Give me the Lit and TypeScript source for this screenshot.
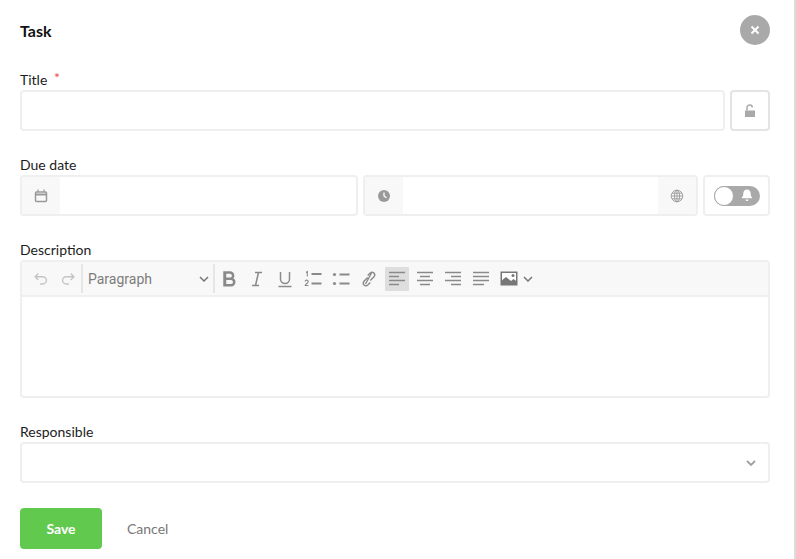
import { LitElement, html, css, svg } from 'lit';
import { customElement } from 'lit/decorators.js';

const icon = (size: number, body: unknown) => html`
  <svg width=${size} height=${size} viewBox="0 0 20 20" fill="none" stroke="#8a8a8a" stroke-width="1.5">${body}</svg>
`;

const lines = (rows: number[][]) => rows.map(([a, b]) => svg`<path d="M${a} 0H${b}" transform="translate(0 0)" />`);

const alignIcon = (rows: [number, number, number][]) => icon(20, rows.map(([a, b, y]) => svg`<path d="M${a} ${y}H${b}" />`));

@customElement('app-root')
export class AppRoot extends LitElement {
  static styles = css`
    :host {
      display: block;
      width: 796px;
      height: 559px;
      box-sizing: border-box;
      border-right: 2px solid #dcdcdc;
      background: #fff;
      font-family: Lato, "Liberation Sans", sans-serif;
      font-size: 14px;
      color: #1c1c1c;
      overflow: hidden;
    }

    .form {
      display: flex;
      flex-direction: column;
      padding: 15px 24px 0 20px;
    }

    .head {
      display: flex;
      align-items: center;
      justify-content: space-between;
      height: 30px;
      margin-bottom: 25px;
    }

    .head h1 {
      margin: 0;
      font-size: 16px;
      font-weight: 700;
      color: #111;
    }

    .close {
      width: 30px;
      height: 30px;
      border-radius: 50%;
      background: #a9a9a9;
      display: flex;
      align-items: center;
      justify-content: center;
    }

    label {
      display: block;
      height: 20px;
      line-height: 20px;
    }

    .req {
      color: #f5474f;
      margin-left: 3px;
      position: relative;
      top: -2px;
    }

    .row {
      display: flex;
      gap: 5px;
      height: 41px;
    }

    .box {
      box-sizing: border-box;
      border: 2px solid #efefef;
      border-radius: 4px;
      background: #fff;
      display: flex;
      align-items: stretch;
      overflow: hidden;
      height: 41px;
    }

    .grow {
      flex: 1;
    }

    .group {
      margin-bottom: 24px;
    }

    .lock {
      width: 40px;
      border-color: #e4e4e4;
      align-items: center;
      justify-content: center;
    }

    .addon {
      width: 38px;
      background: #f8f8f8;
      display: flex;
      align-items: center;
      justify-content: center;
      flex: none;
    }

    .date {
      width: 338px;
      flex: none;
    }

    .time {
      flex: 1;
    }

    .bell {
      width: 67px;
      flex: none;
      align-items: center;
      justify-content: center;
    }

    .toggle {
      width: 46px;
      height: 20px;
      border-radius: 10px;
      background: #a9a9a9;
      display: flex;
      align-items: center;
      justify-content: space-between;
      padding-right: 7px;
      box-sizing: border-box;
    }

    .knob {
      width: 20px;
      height: 20px;
      box-sizing: border-box;
      border-radius: 50%;
      background: #fff;
      border: 1.5px solid #a9a9a9;
    }

    .editor {
      box-sizing: border-box;
      border: 2px solid #efefef;
      border-radius: 4px;
      height: 138px;
      display: flex;
      flex-direction: column;
    }

    .toolbar {
      height: 35px;
      flex: none;
      box-sizing: border-box;
      background: #f8f8f8;
      border-bottom: 2px solid #efefef;
      display: flex;
      align-items: center;
      padding-left: 5px;
    }

    .tool {
      width: 28px;
      height: 24px;
      display: flex;
      align-items: center;
      justify-content: center;
      flex: none;
    }

    .tool.on {
      background: #dedede;
      width: 24px;
      margin: 0 2px;
      border-radius: 1px;
    }

    .hist {
      width: 27px;
    }

    .sep {
      width: 2px;
      height: 29px;
      background: #e6e6e6;
      flex: none;
    }

    .style {
      width: 130px;
      flex: none;
      box-sizing: border-box;
      padding: 0 4px 0 5px;
      display: flex;
      align-items: center;
      justify-content: space-between;
      font-family: Roboto, "Liberation Sans", sans-serif;
      font-size: 14px;
      color: #7c7c7c;
    }

    .select {
      justify-content: flex-end;
      align-items: center;
      padding-right: 12px;
    }

    .actions {
      display: flex;
      align-items: center;
      margin-top: 1px;
    }

    .save {
      width: 82px;
      height: 41px;
      border: 0;
      border-radius: 4px;
      background: #62c94f;
      color: #fff;
      font: 700 14px Lato, "Liberation Sans", sans-serif;
      padding: 0;
    }

    .cancel {
      margin-left: 25px;
      color: #777;
    }
  `;

  render() {
    return html`
      <div class="form">
        <div class="head">
          <h1>Task</h1>
          <div class="close">
            <svg width="10" height="10" viewBox="0 0 10 10" stroke="#fff" stroke-width="2"><path d="M1.5 1.5l7 7M8.500 1.5l-7 7" /></svg>
          </div>
        </div>

        <div class="group">
          <label>Title <span class="req">*</span></label>
          <div class="row">
            <div class="box grow"></div>
            <div class="box lock">
              <svg width="12" height="14" viewBox="0 0 12 14" fill="#a9a9a9"><path d="M1 6.500h10V13H1z" /><path d="M3 6.500V4a2.700 2.700 0 0 1 5.400-.6" fill="none" stroke="#a9a9a9" stroke-width="1.500" /></svg>
            </div>
          </div>
        </div>

        <div class="group">
          <label>Due date</label>
          <div class="row">
            <div class="box date">
              <div class="addon">
                <svg width="14" height="14" viewBox="0 0 14 14" fill="none" stroke="#9a9a9a" stroke-width="1.500"><rect x="1.500" y="3" width="11" height="9.500" rx="1" /><path d="M1.500 5.500h11" stroke-width="2" /><path d="M4 .5v2.500M10 .5v2.500" stroke-width="1.200" /></svg>
              </div>
            </div>
            <div class="box time">
              <div class="addon">
                <svg width="14" height="14" viewBox="0 0 14 14"><circle cx="7" cy="7" r="6" fill="#9a9a9a" /><path d="M7 3.500V7l2.500 1.800" fill="none" stroke="#fff" stroke-width="1.300" /></svg>
              </div>
              <div class="grow"></div>
              <div class="addon">
                <svg width="14" height="14" viewBox="0 0 14 14" fill="none" stroke="#9a9a9a" stroke-width=".9"><circle cx="7" cy="7" r="5.800" /><ellipse cx="7" cy="7" rx="2.600" ry="5.800" /><path d="M1.200 7h11.600M2 4.200h10M2 9.800h10M7 1.200v11.600" /></svg>
              </div>
            </div>
            <div class="box bell">
              <div class="toggle">
                <div class="knob"></div>
                <svg width="12" height="13" viewBox="0 0 12 13" fill="#fff"><path d="M6 .5c-2.400 0-3.700 1.700-3.700 4 0 2.400-.7 3.500-1.800 4.800h11C10.400 8 9.700 6.900 9.700 4.500c0-2.300-1.300-4-3.700-4z" /><path d="M4.500 10.400h3a1.500 1.500 0 0 1-3 0z" /></svg>
              </div>
            </div>
          </div>
        </div>

        <div class="group">
          <label>Description</label>
          <div class="editor">
            <div class="toolbar">
              <div class="tool hist">${icon(18, svg`<path stroke="#c4c4c4" d="M3.500 7.500h8.500a4 4 0 0 1 0 8H9M7 4L3.500 7.500 7 11" />`)}</div>
              <div class="tool hist">${icon(18, svg`<path stroke="#c4c4c4" d="M16.500 7.500H8a4 4 0 0 0 0 8h3M13 4l3.500 3.500L13 11" />`)}</div>
              <div class="sep"></div>
              <div class="style">
                <span>Paragraph</span>
                <svg width="10" height="6" viewBox="0 0 10 6" fill="none" stroke="#777" stroke-width="1.500"><path d="M1 1l4 4 4-4" /></svg>
              </div>
              <div class="sep"></div>
              <div class="tool">${icon(20, svg`<path fill="none" stroke="#8a8a8a" stroke-width="2.500" d="M5.500 3.500h5.500a3 3 0 0 1 0 6.300H5.500h6.500a3.200 3.200 0 0 1 0 6.500H5.500zM6 3v13.500" />`)}</div>
              <div class="tool">${icon(20, svg`<path d="M8 3.500h7M5 16.500h7M11.500 3.500l-3 13" />`)}</div>
              <div class="tool">${icon(20, svg`<path d="M5.500 3v7a4.500 4.500 0 0 0 9 0V3M3.500 17.500h13" />`)}</div>
              <div class="tool">${icon(20, svg`<path d="M8.500 5h10M8.500 14.500h10" stroke-width="1.800" /><path stroke-width="1.100" d="M3 3.500l1.300-1v5M2.200 12.500a1.500 1.500 0 0 1 3 .3c0 1-2.800 2.400-3 3.700h3.200" />`)}</div>
              <div class="tool">${icon(20, svg`<path d="M8.500 5.500h10M8.500 14.500h10" stroke-width="1.800" /><circle cx="3.500" cy="5.500" r="1.600" fill="#8a8a8a" stroke="none" /><circle cx="3.500" cy="14.500" r="1.600" fill="#8a8a8a" stroke="none" />`)}</div>
              <div class="tool">${icon(20, svg`<path stroke-width="1.400" d="M8.700 8.500L5 12.200a3 3 0 0 0 0 3.800 3 3 0 0 0 3.800 0l2.500-2.500M11.300 11.500L15 7.800a3 3 0 0 0 0-3.800 3 3 0 0 0-3.800 0L8.700 6.500M12.500 4L6.500 15" />`)}</div>
              <div class="tool on">${alignIcon([[2, 18, 3.500], [2, 12, 7.500], [2, 18, 11.500], [2, 12, 15.500]])}</div>
              <div class="tool">${alignIcon([[2, 18, 3.500], [5, 15, 7.500], [2, 18, 11.500], [5, 15, 15.500]])}</div>
              <div class="tool">${alignIcon([[2, 18, 3.500], [8, 18, 7.500], [2, 18, 11.500], [8, 18, 15.500]])}</div>
              <div class="tool">${alignIcon([[2, 18, 3.500], [2, 18, 7.500], [2, 18, 11.500], [2, 13, 15.500]])}</div>
              <div class="tool">
                <svg width="18" height="15" viewBox="0 0 18 15"><rect x=".5" y=".5" width="17" height="14" fill="#777" /><rect x="2" y="2" width="14" height="11" fill="#fff" /><path d="M1 14V10l5-4 5 4 2.500-2L17 10.500V14z" fill="#777" /><circle cx="13" cy="4.500" r="1.500" fill="#777" /></svg>
              </div>
              <svg width="10" height="6" viewBox="0 0 10 6" fill="none" stroke="#777" stroke-width="1.500"><path d="M1 1l4 4 4-4" /></svg>
            </div>
          </div>
        </div>

        <div class="group">
          <label>Responsible</label>
          <div class="box select">
            <svg width="10" height="6" viewBox="0 0 10 6" fill="none" stroke="#a0a0a0" stroke-width="1.800"><path d="M1 1l4 4 4-4" /></svg>
          </div>
        </div>

        <div class="actions">
          <button class="save">Save</button>
          <span class="cancel">Cancel</span>
        </div>
      </div>
    `;
  }
}

declare global {
  interface HTMLElementTagNameMap {
    'app-root': AppRoot;
  }
}
